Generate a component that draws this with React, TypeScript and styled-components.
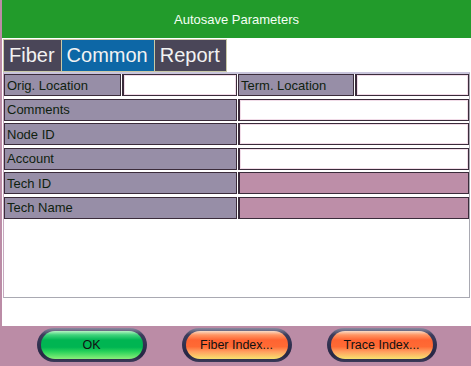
import React from "react";
import styled, { createGlobalStyle, css } from "styled-components";

const Global = createGlobalStyle`
  html, body { margin: 0; padding: 0; background: #bb8ca6; }
  body { font-family: "Liberation Sans", Arial, sans-serif; }
`;

const Screen = styled.div`
  width: 471px;
  height: 366px;
  background: #bb8ca6;
  padding-left: 2px;
  box-sizing: border-box;
  display: flex;
  flex-direction: column;
  overflow: hidden;
`;

const Header = styled.div`
  height: 38px;
  flex: none;
  background: #229b2b;
  color: #f4fff4;
  font-size: 13px;
  display: flex;
  align-items: center;
  justify-content: center;
  padding-top: 1px;
  box-sizing: border-box;
`;

const Panel = styled.div`
  height: 288px;
  flex: none;
  background: #ffffff;
  display: flex;
  flex-direction: column;
  padding-top: 1px;
  box-sizing: border-box;
`;

const TabBar = styled.div`
  height: 33px;
  display: flex;
  padding-left: 1px;
  flex: none;
`;

const Tab = styled.div<{ $active?: boolean }>`
  background: ${(p) => (p.$active ? "#0d67a6" : "#4a4658")};
  color: #f2f2f2;
  font-size: 20px;
  border: 1px solid #c9c9a6;
  padding: 0 6px 0 5px;
  display: flex;
  align-items: center;
  box-sizing: border-box;
  margin-right: -1px;
`;

const FormBox = styled.div`
  margin: 0 1px 0 1px;
  border-top: 2px solid #c9c5dc;
  border-left: 1px solid #c7a9c0;
  border-right: 1px solid #a9a9b2;
  border-bottom: 1px solid #a9a9b2;
  height: 226px;
  box-sizing: border-box;
  display: flex;
  flex-direction: column;
  gap: 2.6px;
`;

const Row = styled.div<{ $split?: boolean }>`
  display: grid;
  grid-template-columns: ${(p) => (p.$split ? "117px 115px 116px 1fr" : "233px 1fr")};
  column-gap: 1px;
  height: 22px;
  flex: none;
`;

const Label = styled.div`
  background: #978ea7;
  border: 1px solid #3b2c3b;
  color: #0f1f0f;
  font-size: 13px;
  display: flex;
  align-items: center;
  padding-left: 2px;
  box-sizing: border-box;
  white-space: nowrap;
  overflow: hidden;
`;

const Field = styled.div<{ $locked?: boolean }>`
  background: ${(p) => (p.$locked ? "#bd8ea8" : "#ffffff")};
  border: 1px solid #3b2c3b;
  border-left-width: 2px;
  box-sizing: border-box;
  box-shadow: inset 0 0 0 1px ${(p) => (p.$locked ? "#bd8ea8" : "#f1dce8")};
`;

const Footer = styled.div`
  flex: 1;
  display: flex;
  align-items: center;
  justify-content: center;
  gap: 35px;
  padding-bottom: 2px;
`;

const ButtonRim = styled.div`
  width: 110px;
  height: 34px;
  border-radius: 17px;
  padding: 3px 4px;
  box-sizing: border-box;
  background: linear-gradient(to bottom, #8a8aa0 0%, #3c3c5c 20%, #262644 80%, #3a3a58 100%);
  display: flex;
`;

const greenFill = css`
  background: linear-gradient(
    to bottom,
    #b8f4c4 0%,
    #40d47c 14%,
    #00b552 32%,
    #00b552 58%,
    #2ad35a 74%,
    #8af07a 100%
  );
`;

const orangeFill = css`
  background: linear-gradient(
    to bottom,
    #f9dcc8 0%,
    #ff9664 14%,
    #ff6432 32%,
    #ff6a34 56%,
    #ffa060 74%,
    #f8e26e 100%
  );
`;

const Pill = styled.button<{ $tone: "green" | "orange" }>`
  flex: 1;
  border: none;
  border-radius: 14px;
  ${(p) => (p.$tone === "green" ? greenFill : orangeFill)}
  color: #111;
  font-family: "Liberation Sans", Arial, sans-serif;
  font-size: 12.5px;
  padding: 0;
  display: flex;
  align-items: center;
  justify-content: center;
`;

const rows: { label: string; locked?: boolean }[] = [
  { label: "Comments" },
  { label: "Node ID" },
  { label: "Account" },
  { label: "Tech ID", locked: true },
  { label: "Tech Name", locked: true },
];

export default function App() {
  return (
    <>
      <Global />
      <Screen>
        <Header>Autosave Parameters</Header>
        <Panel>
          <TabBar>
            <Tab>Fiber</Tab>
            <Tab $active>Common</Tab>
            <Tab>Report</Tab>
          </TabBar>
          <FormBox>
            <Row $split>
              <Label>Orig. Location</Label>
              <Field />
              <Label>Term. Location</Label>
              <Field />
            </Row>
            {rows.map((r) => (
              <Row key={r.label}>
                <Label>{r.label}</Label>
                <Field $locked={r.locked} />
              </Row>
            ))}
          </FormBox>
        </Panel>
        <Footer>
          <ButtonRim>
            <Pill $tone="green">OK</Pill>
          </ButtonRim>
          <ButtonRim>
            <Pill $tone="orange">Fiber Index...</Pill>
          </ButtonRim>
          <ButtonRim>
            <Pill $tone="orange">Trace Index...</Pill>
          </ButtonRim>
        </Footer>
      </Screen>
    </>
  );
}
